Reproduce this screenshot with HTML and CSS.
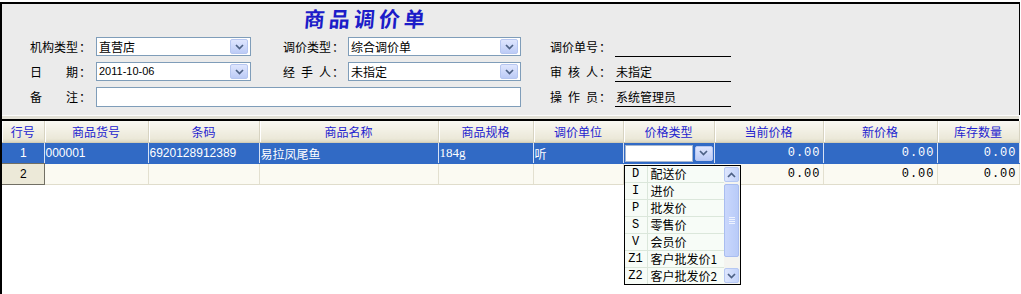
FILE: index.html
```html
<!DOCTYPE html>
<html lang="zh-CN">

<head>
    <meta charset="UTF-8">
    <title>商品调价单</title>
    <link rel="stylesheet" href="styles.css">
</head>

<body>
    <div class="bill">
        <div class="bill-head">
            <h1 class="bill-title">商品调价单</h1>
            <div class="form">
                <label class="lbl"><span class="lbl-txt">机构类型</span>：</label>
                <div class="combo">
                    <span class="combo-text">直营店</span>
                    <span class="drop-btn"><svg width="9" height="6" viewBox="0 0 9 6"><path d="M1 1 L4.5 4.5 L8 1" /></svg></span>
                </div>
                <span></span>
                <label class="lbl"><span class="lbl-txt">调价类型</span>：</label>
                <div class="combo">
                    <span class="combo-text">综合调价单</span>
                    <span class="drop-btn"><svg width="9" height="6" viewBox="0 0 9 6"><path d="M1 1 L4.5 4.5 L8 1" /></svg></span>
                </div>
                <span></span>
                <label class="lbl"><span class="lbl-txt">调价单号</span>：</label>
                <div class="readonly"></div>

                <label class="lbl"><span class="lbl-txt">日期</span>：</label>
                <div class="combo">
                    <span class="combo-text latin">2011-10-06</span>
                    <span class="drop-btn"><svg width="9" height="6" viewBox="0 0 9 6"><path d="M1 1 L4.5 4.5 L8 1" /></svg></span>
                </div>
                <span></span>
                <label class="lbl"><span class="lbl-txt">经手人</span>：</label>
                <div class="combo">
                    <span class="combo-text">未指定</span>
                    <span class="drop-btn"><svg width="9" height="6" viewBox="0 0 9 6"><path d="M1 1 L4.5 4.5 L8 1" /></svg></span>
                </div>
                <span></span>
                <label class="lbl"><span class="lbl-txt">审核人</span>：</label>
                <div class="readonly">未指定</div>

                <label class="lbl"><span class="lbl-txt">备注</span>：</label>
                <div class="combo remark"></div>
                <span></span>
                <label class="lbl"><span class="lbl-txt">操作员</span>：</label>
                <div class="readonly">系统管理员</div>
            </div>
        </div>
        <div class="sep"></div>

        <table class="grid">
            <colgroup>
                <col class="c-no">
                <col class="c-code">
                <col class="c-bar">
                <col class="c-name">
                <col class="c-spec">
                <col class="c-unit">
                <col class="c-type">
                <col class="c-cur">
                <col class="c-new">
                <col class="c-stock">
            </colgroup>
            <thead>
                <tr>
                    <th>行号</th>
                    <th>商品货号</th>
                    <th>条码</th>
                    <th>商品名称</th>
                    <th>商品规格</th>
                    <th>调价单位</th>
                    <th>价格类型</th>
                    <th>当前价格</th>
                    <th>新价格</th>
                    <th>库存数量</th>
                </tr>
            </thead>
            <tbody>
                <tr class="selected">
                    <td class="rowno">1</td>
                    <td>000001</td>
                    <td>6920128912389</td>
                    <td>易拉凤尾鱼</td>
                    <td class="serif">184g</td>
                    <td>听</td>
                    <td class="editing">
                        <div class="cell-editor">
                            <span class="cell-input"></span>
                            <span class="drop-btn"><svg width="9" height="6" viewBox="0 0 9 6"><path d="M1 1 L4.5 4.5 L8 1" /></svg></span>
                        </div>
                        <div class="picker">
                            <ul class="picker-list">
                                <li><span class="pk-code">D</span><span class="pk-name">配送价</span></li>
                                <li><span class="pk-code">I</span><span class="pk-name">进价</span></li>
                                <li><span class="pk-code">P</span><span class="pk-name">批发价</span></li>
                                <li><span class="pk-code">S</span><span class="pk-name">零售价</span></li>
                                <li><span class="pk-code">V</span><span class="pk-name">会员价</span></li>
                                <li><span class="pk-code">Z1</span><span class="pk-name">客户批发价1</span></li>
                                <li><span class="pk-code">Z2</span><span class="pk-name">客户批发价2</span></li>
                            </ul>
                            <div class="vscroll">
                                <span class="sb-btn"><svg width="9" height="6" viewBox="0 0 9 6"><path d="M1 5 L4.5 1.5 L8 5" /></svg></span>
                                <span class="sb-thumb"><i></i><i></i><i></i><i></i></span>
                                <span class="sb-track"></span>
                                <span class="sb-btn"><svg width="9" height="6" viewBox="0 0 9 6"><path d="M1 1 L4.5 4.5 L8 1" /></svg></span>
                            </div>
                        </div>
                    </td>
                    <td class="num">0.00</td>
                    <td class="num">0.00</td>
                    <td class="num">0.00</td>
                </tr>
                <tr>
                    <td class="rowno">2</td>
                    <td></td>
                    <td></td>
                    <td></td>
                    <td></td>
                    <td></td>
                    <td></td>
                    <td class="num">0.00</td>
                    <td class="num">0.00</td>
                    <td class="num">0.00</td>
                </tr>
            </tbody>
        </table>
    </div>
</body>

</html>
```

FILE: styles.css
```css
body {
    margin: 0;
    background-color: #ffffff;
    font-family: "Noto Sans CJK SC", sans-serif;
    font-size: 12px;
    color: #000;
}

.bill {
    width: 1020px;
    height: 292px;
    margin-top: 2px;
    border-left: 2px solid #000;
    box-sizing: border-box;
}

/* ---- head panel ---- */
.bill-head {
    background-color: #ebebeb;
    border-top: 2px solid #000;
    border-right: 1px solid #000;
    padding: 1px 0 8px 0;
}

.bill-title {
    margin: 0 0 6px 301px;
    height: 26px;
    line-height: 26px;
    font-size: 21px;
    font-weight: 700;
    letter-spacing: 4px;
    color: #1c1cc8;
    transform: skewX(-5deg);
    transform-origin: left bottom;
    width: 140px;
}

.form {
    display: grid;
    grid-template-columns: 66px 155px 32px 65px 173px 29px 65px 116px;
    grid-auto-rows: 20px;
    row-gap: 5px;
    padding-left: 28px;
}

.lbl {
    display: flex;
    line-height: 20px;
    white-space: nowrap;
}

.lbl-txt {
    width: 48px;
    text-align: justify;
    text-align-last: justify;
    margin-right: 1px;
}

.combo {
    display: flex;
    align-items: center;
    justify-content: space-between;
    background-color: #fff;
    border: 1px solid #7f9db9;
    height: 19px;
    box-sizing: border-box;
    padding: 0 2px 0 2px;
}

.combo.remark {
    grid-column: 2 / 6;
    height: 20px;
}

.combo-text {
    line-height: 17px;
}

.latin {
    font-family: "Liberation Sans", sans-serif;
    font-size: 11px;
}

.drop-btn {
    display: flex;
    align-items: center;
    justify-content: center;
    width: 18px;
    height: 15px;
    box-sizing: border-box;
    background: linear-gradient(#dfe6fe, #bccbf6);
    border: 1px solid #b6c6f0;
    border-radius: 2px;
}

.drop-btn svg path,
.sb-btn svg path {
    fill: none;
    stroke: #4d6185;
    stroke-width: 1.7;
}

.readonly {
    border-bottom: 1px solid #000;
    line-height: 20px;
    height: 20px;
    box-sizing: border-box;
    padding-left: 1px;
}

.sep {
    height: 3px;
    border-top: 1px solid #fbfbfb;
    border-bottom: 2px solid #000;
    background-color: #e2e0d6;
    margin-right: 1px;
}

/* ---- grid ---- */
.grid {
    table-layout: fixed;
    border-collapse: collapse;
    width: 1017px;
}

.c-no { width: 42px; }
.c-code { width: 104px; }
.c-bar { width: 111px; }
.c-name { width: 179px; }
.c-spec { width: 95px; }
.c-unit { width: 90px; }
.c-type { width: 91px; }
.c-cur { width: 109px; }
.c-new { width: 114px; }
.c-stock { width: 82px; }

.grid th {
    height: 21px;
    padding: 0;
    font-weight: 400;
    color: #2323cf;
    background: linear-gradient(#f9f8f2, #ebe8d8 85%, #dcd8c4);
    border-right: 1px solid #d7d3c1;
    box-shadow: inset 1px 0 #ffffff;
    border-bottom: 1px solid #d1cdb8;
}

.grid td {
    height: 20px;
    padding: 0 0 0 1px;
    white-space: nowrap;
    overflow: visible;
    background-color: #fbfaf2;
    border-right: 1px solid #e3e0d0;
    border-bottom: 1px solid #e0ddcc;
    font-family: "Liberation Sans", "Noto Sans CJK SC", sans-serif;
}

.grid .selected td {
    background-color: #316ac5;
    color: #fff;
    border-right: 1px solid #d8e2f4;
    border-bottom: 1px solid #316ac5;
}

.grid td.rowno {
    text-align: center;
    background-color: #ece9d8;
    border-right: 1px solid #716f64;
    border-bottom: 1px solid #716f64;
}

.grid .selected td.rowno {
    background-color: #316ac5;
    border-right: 1px solid #d8e2f4;
}

.grid td.num {
    text-align: right;
    padding-right: 2px;
    font-family: "Liberation Mono", monospace;
    font-size: 12px;
    letter-spacing: 1px;
}

.grid td.serif {
    font-family: "Liberation Serif", serif;
    font-size: 13px;
}

/* ---- cell editor + drop list ---- */
.grid td.editing {
    position: relative;
    padding: 0;
}

.cell-editor {
    display: flex;
    align-items: center;
    gap: 2px;
    padding-left: 1px;
}

.cell-input {
    width: 66px;
    height: 15px;
    background-color: #fff;
    border: 1px solid #a7b7cf;
}

.picker {
    position: absolute;
    left: 0;
    top: 22px;
    width: 117px;
    height: 120px;
    box-sizing: border-box;
    border: 1px solid #000;
    background-color: #f7fcf7;
    display: flex;
    color: #000;
    z-index: 2;
}

.picker-list {
    list-style: none;
    margin: 0;
    padding: 0;
    flex: 1;
}

.picker-list li {
    display: flex;
    height: 16px;
    line-height: 16px;
    border-bottom: 1px solid #dbe7db;
}

.picker-list li:last-child {
    border-bottom: none;
}

.pk-code {
    width: 22px;
    text-align: center;
    font-family: "Liberation Mono", monospace;
    font-size: 12px;
    border-right: 1px solid #dbe7db;
}

.pk-name {
    padding-left: 3px;
    font-family: "Noto Sans CJK SC", sans-serif;
}

.vscroll {
    width: 16px;
    display: flex;
    flex-direction: column;
    align-items: center;
    background-color: #f4f4f0;
    padding: 1px 0;
}

.sb-btn {
    display: flex;
    align-items: center;
    justify-content: center;
    width: 15px;
    height: 15px;
    box-sizing: border-box;
    background: linear-gradient(90deg, #dde6fd, #c3d3fa);
    border: 1px solid #b6c8f3;
    border-radius: 2px;
}

.sb-thumb {
    margin-top: 2px;
    width: 15px;
    height: 73px;
    box-sizing: border-box;
    background: linear-gradient(90deg, #c9d7fc, #b9cbf8);
    border: 1px solid #a9bdf0;
    border-radius: 2px;
    display: flex;
    flex-direction: column;
    align-items: center;
    justify-content: center;
    gap: 1px;
}

.sb-thumb i {
    display: block;
    width: 6px;
    height: 1px;
    background-color: #eef3ff;
}

.sb-track {
    flex: 1;
}
```
